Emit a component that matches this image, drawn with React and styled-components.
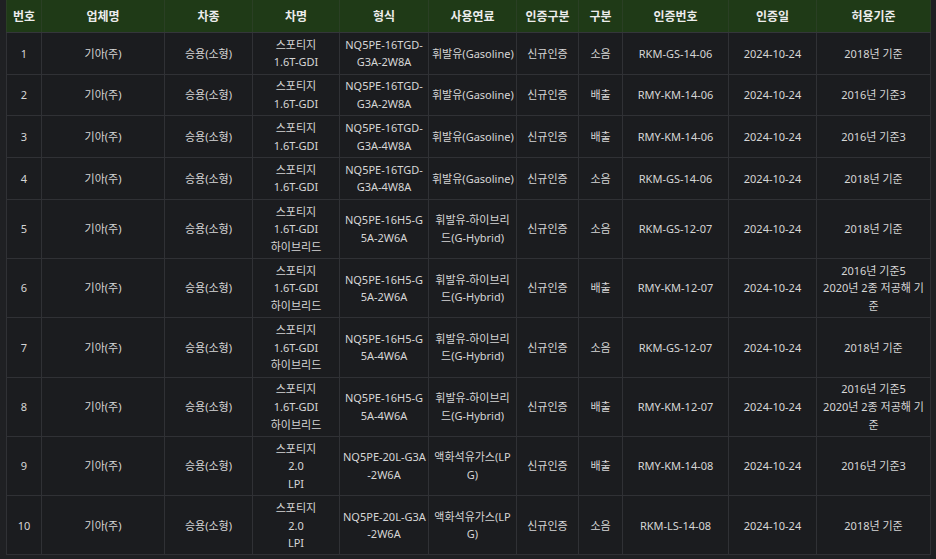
import React from 'react'
import styled, { createGlobalStyle } from 'styled-components'

const GlobalStyle = createGlobalStyle`
  html, body {
    margin: 0;
    padding: 0;
    background-color: #1f2023;
  }
  body {
    font-family: "Noto Sans", "Noto Sans CJK KR", sans-serif;
  }
`

const Wrapper = styled.div`
  padding: 0 6px;
  height: 559px;
  overflow: hidden;
`

const Table = styled.table`
  width: 924px;
  table-layout: fixed;
  border-collapse: collapse;
  background-color: #1b1c1f;
  color: #d6d6d6;
  font-size: 11px;
`

const HeadCell = styled.th`
  height: 32px;
  padding: 0 3px;
  background-color: #1f3a17;
  color: #ececec;
  font-size: 12px;
  font-weight: 700;
  text-align: center;
  border: 1px solid #2a3f24;
  border-top: none;
  border-bottom-color: #34363a;
  white-space: nowrap;
`

const Cell = styled.td`
  padding: 2.75px 3px;
  line-height: 17.6px;
  text-align: center;
  vertical-align: middle;
  border: 1px solid #303135;
  white-space: nowrap;
`

const columns = [
  { label: '번호', width: 35 },
  { label: '업체명', width: 123 },
  { label: '차종', width: 88 },
  { label: '차명', width: 87 },
  { label: '형식', width: 89 },
  { label: '사용연료', width: 88 },
  { label: '인증구분', width: 62 },
  { label: '구분', width: 44 },
  { label: '인증번호', width: 106 },
  { label: '인증일', width: 88 },
  { label: '허용기준', width: 114 },
]

const GDI = ['스포티지', '1.6T-GDI']
const HYBRID = ['스포티지', '1.6T-GDI', '하이브리드']
const LPI = ['스포티지', '2.0', 'LPI']
const GAS = '휘발유(Gasoline)'
const G_HYBRID = ['휘발유-하이브리', '드(G-Hybrid)']
const LPG = ['액화석유가스(LP', 'G)']
const LOW_EMISSION = ['2016년 기준5', '2020년 2종 저공해 기', '준']

const rows = [
  [GDI, ['NQ5PE-16TGD-', 'G3A-2W8A'], GAS, '소음', 'RKM-GS-14-06', '2018년 기준'],
  [GDI, ['NQ5PE-16TGD-', 'G3A-2W8A'], GAS, '배출', 'RMY-KM-14-06', '2016년 기준3'],
  [GDI, ['NQ5PE-16TGD-', 'G3A-4W8A'], GAS, '배출', 'RMY-KM-14-06', '2016년 기준3'],
  [GDI, ['NQ5PE-16TGD-', 'G3A-4W8A'], GAS, '소음', 'RKM-GS-14-06', '2018년 기준'],
  [HYBRID, ['NQ5PE-16H5-G', '5A-2W6A'], G_HYBRID, '소음', 'RKM-GS-12-07', '2018년 기준'],
  [HYBRID, ['NQ5PE-16H5-G', '5A-2W6A'], G_HYBRID, '배출', 'RMY-KM-12-07', LOW_EMISSION],
  [HYBRID, ['NQ5PE-16H5-G', '5A-4W6A'], G_HYBRID, '소음', 'RKM-GS-12-07', '2018년 기준'],
  [HYBRID, ['NQ5PE-16H5-G', '5A-4W6A'], G_HYBRID, '배출', 'RMY-KM-12-07', LOW_EMISSION],
  [LPI, ['NQ5PE-20L-G3A', '-2W6A'], LPG, '배출', 'RMY-KM-14-08', '2016년 기준3'],
  [LPI, ['NQ5PE-20L-G3A', '-2W6A'], LPG, '소음', 'RKM-LS-14-08', '2018년 기준'],
]

// a value is either a string or an array of lines
const Lines = ({ value }) => {
  if (!Array.isArray(value)) return value
  return value.map((line, i) => (
    <React.Fragment key={i}>
      {i > 0 && <br />}
      {line}
    </React.Fragment>
  ))
}

const App = () => {
  return (
    <Wrapper>
      <GlobalStyle />
      <Table>
        <colgroup>
          {columns.map(c => <col key={c.label} style={{ width: c.width }} />)}
        </colgroup>
        <thead>
          <tr>
            {columns.map(c => <HeadCell key={c.label}>{c.label}</HeadCell>)}
          </tr>
        </thead>
        <tbody>
          {rows.map((r, i) => {
            const [name, model, fuel, kind, certNo, standard] = r
            const cells = [
              String(i + 1), '기아(주)', '승용(소형)', name, model, fuel,
              '신규인증', kind, certNo, '2024-10-24', standard,
            ]
            return (
              <tr key={i}>
                {cells.map((v, j) => (
                  <Cell key={j}><Lines value={v} /></Cell>
                ))}
              </tr>
            )
          })}
        </tbody>
      </Table>
    </Wrapper>
  )
}

export default App
